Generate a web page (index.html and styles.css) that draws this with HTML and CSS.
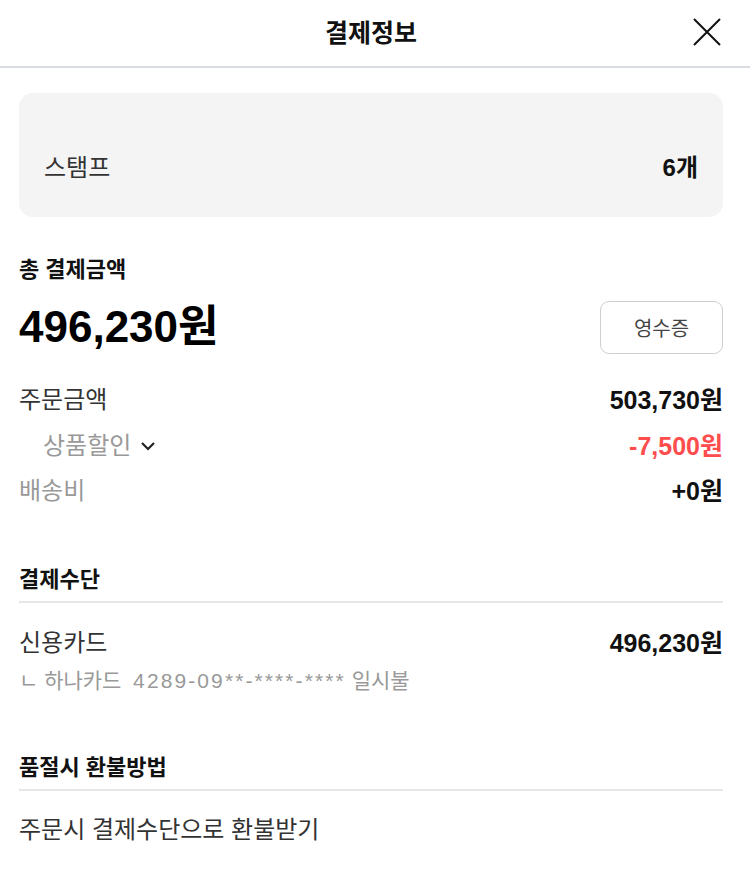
FILE: index.html
```html
<!DOCTYPE html>
<html lang="ko">
<head>
<meta charset="utf-8">
<link rel="stylesheet" href="styles.css">
</head>
<body>
<div class="page">
  <header class="topbar">
    <h1 class="title">결제정보</h1>
    <button class="close" aria-label="닫기">
      <svg width="28" height="28" viewBox="0 0 28 28"><path d="M1 1L27 27M27 1L1 27" stroke="#111" stroke-width="2" fill="none"/></svg>
    </button>
  </header>
  <main class="content">
    <div class="card">
      <span class="card-label">스탬프</span>
      <span class="card-value">6개</span>
    </div>

    <section class="total">
      <div class="total-label">총 결제금액</div>
      <div class="total-row">
        <div class="total-amount">496,230원</div>
        <button class="receipt">영수증</button>
      </div>
    </section>

    <section class="lines">
      <div class="line">
        <span class="line-label dark">주문금액</span>
        <span class="line-value">503,730원</span>
      </div>
      <div class="line">
        <span class="line-label sub">상품할인
          <svg class="chev" width="16" height="10" viewBox="0 0 16 10"><path d="M2 2L8 8L14 2" stroke="#222" stroke-width="2.2" fill="none"/></svg>
        </span>
        <span class="line-value red">-7,500원</span>
      </div>
      <div class="line">
        <span class="line-label">배송비</span>
        <span class="line-value">+0원</span>
      </div>
    </section>

    <section class="block">
      <h2 class="block-title">결제수단</h2>
      <div class="line pay">
        <span class="line-label dark">신용카드</span>
        <span class="line-value">496,230원</span>
      </div>
      <div class="card-info">ㄴ 하나카드&nbsp; <span class="card-num">4289-09**-****-****</span> 일시불</div>
    </section>

    <section class="block">
      <h2 class="block-title">품절시 환불방법</h2>
      <div class="refund">주문시 결제수단으로 환불받기</div>
    </section>
  </main>
</div>
</body>
</html>
```

FILE: styles.css
```css
* { box-sizing: border-box; }
html, body { margin: 0; padding: 0; background: #fff; }
body {
  font-family: "Liberation Sans", "Noto Sans CJK KR", sans-serif;
  color: #222;
}
.page { width: 750px; }

.topbar {
  height: 68px;
  border-bottom: 2px solid #d9dde3;
  display: flex;
  align-items: center;
  justify-content: center;
  padding-right: 8px;
  position: relative;
}
.title {
  margin: 0;
  font-size: 25px;
  font-weight: 700;
  color: #111;
  line-height: 1;
}
.close {
  position: absolute;
  right: 29px;
  top: 18px;
  width: 28px;
  height: 28px;
  padding: 0;
  border: 0;
  background: none;
}
.close svg { display: block; }

.content { padding: 25px 27px 0 19px; }

.card {
  background: #f4f4f4;
  border-radius: 14px;
  height: 124px;
  padding: 61px 25px 0 25px;
  display: flex;
  justify-content: space-between;
  align-items: flex-start;
  font-size: 24px;
  line-height: 28px;
}
.card-label { color: #333; }
.card-value { font-weight: 700; color: #111; }

.total { margin-top: 41px; }
.total-label {
  font-size: 22px;
  font-weight: 700;
  line-height: 24px;
  color: #111;
}
.total-row {
  margin-top: 18px;
  display: flex;
  justify-content: space-between;
  align-items: center;
  height: 54px;
}
.total-amount {
  font-size: 44px;
  font-weight: 700;
  line-height: 54px;
  color: #000;
}
.receipt {
  width: 123px;
  height: 53px;
  border: 1px solid #cfcfcf;
  border-radius: 9px;
  background: #fff;
  font-family: "Noto Sans CJK KR", sans-serif;
  font-size: 20px;
  color: #444;
  padding: 0;
}

.lines {
  margin-top: 32px;
  display: flex;
  flex-direction: column;
  gap: 17.5px;
}
.line {
  display: flex;
  justify-content: space-between;
  align-items: center;
  font-size: 24px;
  line-height: 28px;
}
.line-label { color: #999; display: inline-flex; align-items: center; }
.line-label.dark { color: #333; }
.line-label.sub { padding-left: 24px; }
.chev { margin-left: 9px; }
.line-value { font-weight: 700; color: #111; font-size: 25px; }
.line-value.red { color: #ff4d4d; }

.block { margin-top: 62px; }
.block-title {
  margin: 0;
  font-size: 22px;
  font-weight: 700;
  line-height: 26px;
  color: #111;
  padding-bottom: 8px;
  border-bottom: 2px solid #e6e6e6;
}
.line.pay { margin-top: 26px; }
.card-info {
  margin-top: 11px;
  font-size: 21px;
  line-height: 26px;
  color: #999;
}
.card-num { letter-spacing: 2.1px; }
.block + .block { margin-top: 61px; }
.refund {
  margin-top: 25px;
  font-size: 24px;
  line-height: 28px;
  color: #333;
}
```
